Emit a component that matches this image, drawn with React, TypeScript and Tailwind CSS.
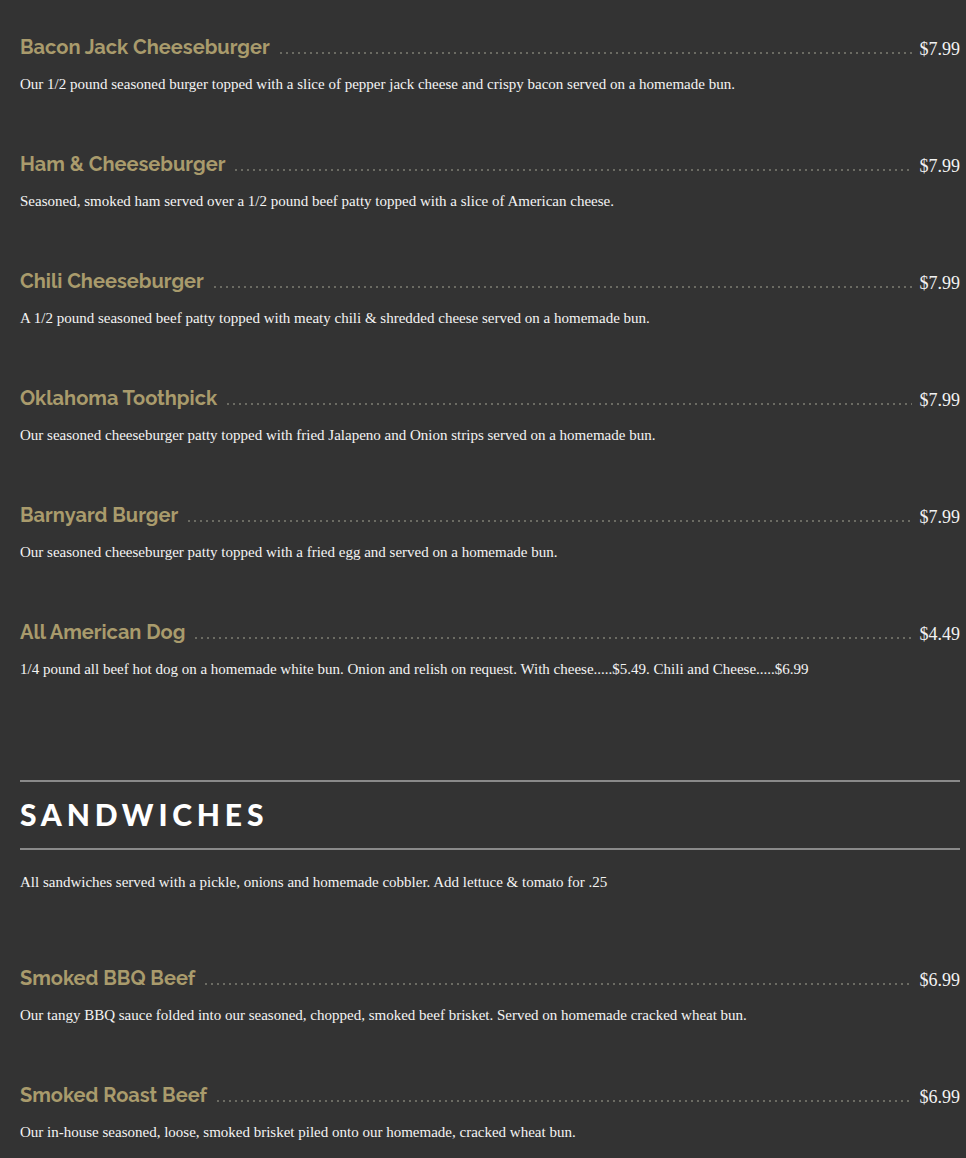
const burgers = [
  {
    name: 'Bacon Jack Cheeseburger',
    price: '$7.99',
    desc: 'Our 1/2 pound seasoned burger topped with a slice of pepper jack cheese and crispy bacon served on a homemade bun.',
  },
  {
    name: 'Ham & Cheeseburger',
    price: '$7.99',
    desc: 'Seasoned, smoked ham served over a 1/2 pound beef patty topped with a slice of American cheese.',
  },
  {
    name: 'Chili Cheeseburger',
    price: '$7.99',
    desc: 'A 1/2 pound seasoned beef patty topped with meaty chili & shredded cheese served on a homemade bun.',
  },
  {
    name: 'Oklahoma Toothpick',
    price: '$7.99',
    desc: 'Our seasoned cheeseburger patty topped with fried Jalapeno and Onion strips served on a homemade bun.',
  },
  {
    name: 'Barnyard Burger',
    price: '$7.99',
    desc: 'Our seasoned cheeseburger patty topped with a fried egg and served on a homemade bun.',
  },
  {
    name: 'All American Dog',
    price: '$4.49',
    desc: '1/4 pound all beef hot dog on a homemade white bun. Onion and relish on request. With cheese.....$5.49. Chili and Cheese.....$6.99',
  },
];

const sandwiches = [
  {
    name: 'Smoked BBQ Beef',
    price: '$6.99',
    desc: 'Our tangy BBQ sauce folded into our seasoned, chopped, smoked beef brisket. Served on homemade cracked wheat bun.',
  },
  {
    name: 'Smoked Roast Beef',
    price: '$6.99',
    desc: 'Our in-house seasoned, loose, smoked brisket piled onto our homemade, cracked wheat bun.',
  },
];

type Item = { name: string; price: string; desc: string };

function MenuItem({ item }: { item: Item }) {
  return (
    <div className="mb-[54px]">
      <div className="flex h-[30px] items-center">
        <h3 className="font-['Raleway','Lato',sans-serif] text-[20px] font-bold leading-[30px] text-[#a99b6c]">
          {item.name}
        </h3>
        <div className="mx-2 mt-[12px] h-[2px] flex-1 bg-[radial-gradient(circle,#6b6b63_0.9px,transparent_1.1px)] bg-[length:6px_2px] bg-repeat-x" />
        <span className="mt-[4px] font-['Liberation_Serif',serif] text-[18px] text-[#f2f2f2]">
          {item.price}
        </span>
      </div>
      <p className="mt-[11px] font-['Liberation_Serif',serif] text-[15px] leading-[22px] text-[#f4f4f4]">
        {item.desc}
      </p>
    </div>
  );
}

export default function App() {
  return (
    <div className="min-h-[1158px] bg-[#333333] pl-5 pr-[6px] pt-[32px]">
      {burgers.map((b) => (
        <MenuItem key={b.name} item={b} />
      ))}

      <section className="mt-[100px]">
        <div className="h-[2px] bg-[#8a8a8a]" />
        <h2 className="mt-[14px] font-['Lato',sans-serif] text-[30px] font-black uppercase leading-[36px] tracking-[0.16em] text-white">
          Sandwiches
        </h2>
        <div className="mt-[16px] h-[2px] bg-[#8a8a8a]" />
        <p className="mt-[21px] font-['Liberation_Serif',serif] text-[15px] leading-[22px] text-[#f4f4f4]">
          All sandwiches served with a pickle, onions and homemade cobbler. Add lettuce &amp; tomato for .25
        </p>
        <div className="mt-[70px]">
          {sandwiches.map((s) => (
            <MenuItem key={s.name} item={s} />
          ))}
        </div>
      </section>
    </div>
  );
}
